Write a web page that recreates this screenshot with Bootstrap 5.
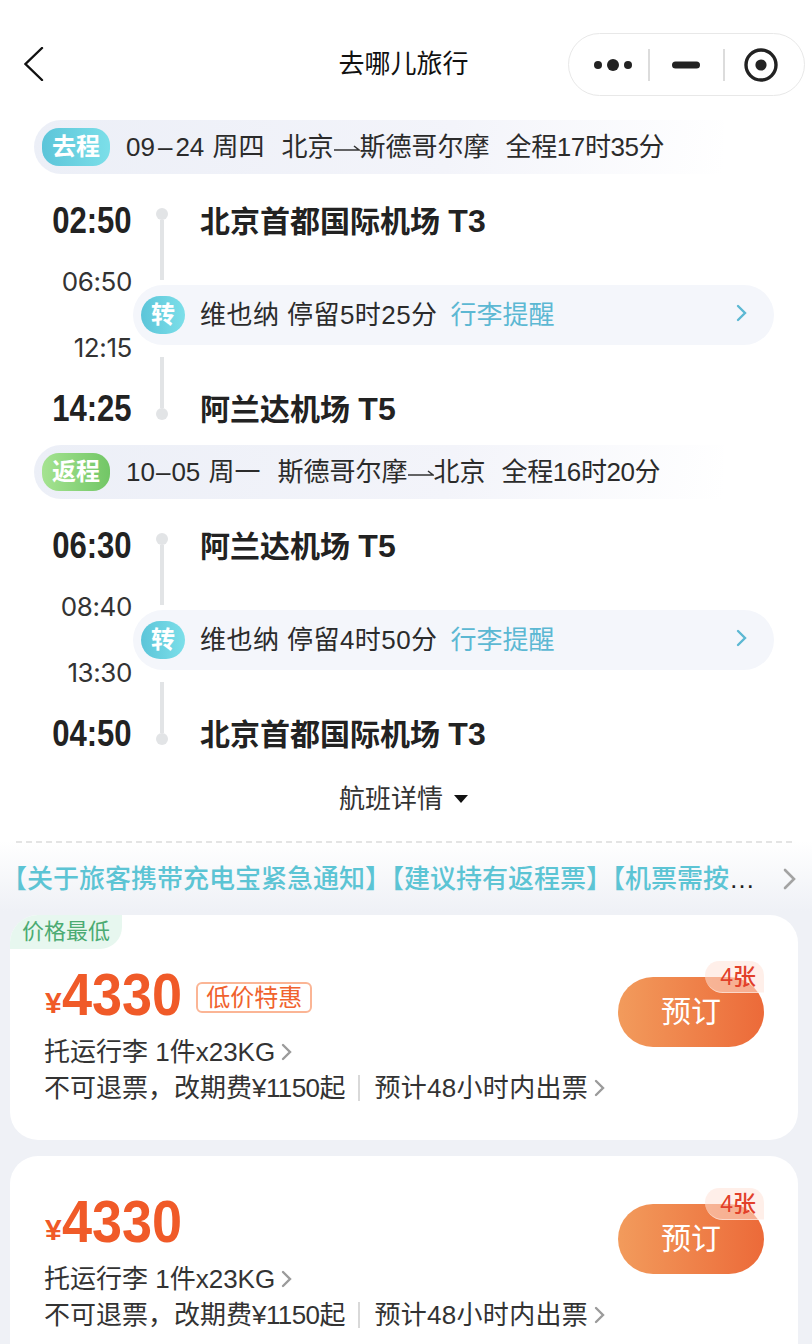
<!DOCTYPE html>
<html lang="zh-CN">
<head>
    <meta charset="UTF-8">
    <meta name="viewport" content="width=device-width, initial-scale=1.0">
    <title>去哪儿旅行</title>
    <link href="https://cdn.jsdelivr.net/npm/bootstrap@5.3.0/dist/css/bootstrap.min.css" rel="stylesheet">
    <style>
        html, body { height: 1344px; overflow: hidden; }
        body { font-family: "Liberation Sans", "Noto Sans CJK SC", sans-serif; color: #2b2b2b; font-size: 26px; line-height: 30px; background: #fff; }

        .top-bar { height: 120px; padding: 33px 7px 0 24px; position: relative; }
        .top-back { margin-top: 14px; }
        .top-title { position: absolute; left: 0; right: 5px; top: 49px; text-align: center; color: #111; font-size: 26px; }
        .capsule { width: 237px; height: 63px; border: 1px solid #e8e8e8; border-radius: 32px; padding-left: 24px; position: relative; }
        .capsule-sep { width: 2px; height: 32px; background: #dcdcdc; }
        .cap-sep1 { margin-left: 15px; }
        .cap-minus { margin-left: 22px; }
        .cap-sep2 { margin-left: 23px; }
        .cap-target { margin-left: 19px; }

        .seg-bar { height: 54px; margin-left: 34px; width: 690px; border-radius: 27px 0 0 27px; padding-left: 8px; background: linear-gradient(100deg, #eceff7 0%, #f3f4fa 60%, #fff 100%); gap: 16px; white-space: nowrap; }
        .seg-tag { width: 68px; height: 38px; border-radius: 17px; color: #fff; font-weight: 700; font-size: 24px; }
        .tag-out { background: linear-gradient(90deg, #5cc5d9, #7cdfe9); }
        .tag-back { background: linear-gradient(90deg, #a5e391, #72c666); }
        .seg-date { word-spacing: 1px; }
        .seg-dash { margin: 0 3px; }
        .seg-dash.tight { margin: 0 1px; }
        .seg-route { margin-left: 1px; }
        .seg-arrow { vertical-align: 2px; }
        .seg-total { letter-spacing: -.4px; }

        .stop-row { height: 48px; }
        .stop-row.first { margin-top: 23px; }
        .stop-row.last { margin-bottom: 12px; }
        .stop-time { width: 132px; text-align: right; font-weight: 700; font-size: 37px; color: #222; }
        .stop-time span { display: inline-block; transform: scaleX(.84); transform-origin: right center; }
        .axis { width: 60px; height: 100%; }
        .axis-dot { width: 12px; height: 12px; border-radius: 50%; background: #e2e4e6; flex: none; }
        .axis-line { width: 4px; background: #e2e4e6; flex: 1; }
        .axis-top { padding-top: 11px; }
        .axis-bottom { padding-bottom: 13px; }
        .stop-name { margin-left: 8px; font-size: 30px; font-weight: 700; color: #222; white-space: nowrap; }
        .term { font-size: 32px; }

        .stay-row { height: 140px; }
        .stay-times { width: 132px; padding-top: 22px; gap: 36px; text-align: right; font-family: Inter, "Liberation Sans", sans-serif; font-size: 26px; letter-spacing: -.4px; color: #333; }
        .stay-line { width: 4px; margin-left: 28px; background: #e2e4e6; }
        .line-upper { height: 35px; }
        .line-lower { height: 28px; }
        .stay-pill { width: 641px; height: 60px; margin: 5px 0 12px 1px; border-radius: 30px; background: #f4f6fb; padding: 0 27px 0 8px; white-space: nowrap; }
        .stay-icon { width: 44px; height: 38px; border-radius: 19px; margin-right: 15px; color: #fff; font-weight: 700; font-size: 24px; background: linear-gradient(90deg, #5cc5d9, #7cdfe9); }
        .stay-text { letter-spacing: .45px; }
        .stay-link { color: #5cb8d3; margin-left: 13px; }
        .stay-chevron { margin-top: -4px; }

        .detail-link { height: 60px; margin-top: 11px; padding-right: 5px; gap: 11px; color: #333; }
        .caret { width: 0; height: 0; border-left: 7px solid transparent; border-right: 7px solid transparent; border-top: 8px solid #111; }

        .lower { margin-top: 12px; background: linear-gradient(#fff 0, #eff1f6 70px); height: 510px; padding: 0 14px 0 10px; }
        .dash-line { border-top: 2px dashed #e4e4e4; margin: 0 6px 0 6px; }
        .notice { height: 72px; }
        .notice-text { color: #5cc4d4; white-space: nowrap; margin-left: -9px; font-weight: 500; }
        .notice-more { color: #222; font-weight: 400; }
        .notice-chevron { margin-right: 2px; }

        .fare { background: #fff; border-radius: 28px; position: relative; margin-bottom: 16px; padding: 40px 34px 0 34px; height: 225px; }
        .fare.fare-tagged { padding-top: 54px; }
        .fare-flag { position: absolute; left: 0; top: 0; width: 112px; height: 34px; background: #e7f7ef; color: #4bab72; font-size: 22px; border-radius: 28px 0 22px 0; text-align: center; line-height: 34px; }
        .price-row { margin: 0 0 13px 1px; }
        .price-mark { color: #f05a28; font-weight: 700; font-size: 30px; line-height: 1; padding-bottom: 3px; }
        .price-num { display: inline-block; color: #f05a28; font-weight: 700; font-size: 60px; line-height: 52px; transform: scaleX(.9); transform-origin: left center; margin-right: -15px; }
        .price-tag { border: 2px solid #fbb595; border-radius: 6px; color: #f0622e; font-size: 24px; line-height: 27px; padding: 0 8px; margin-left: 16px; margin-bottom: 8px; }
        .fare-line { height: 36px; white-space: nowrap; color: #333; }
        .fare-yuan { letter-spacing: -.6px; }
        .fare-tail { letter-spacing: .3px; }
        .fare-sep { width: 2px; height: 26px; background: #d9d9d9; margin: 0 14px 0 13px; }
        .fare-chevron { margin-left: 6px; }
        .book-wrap { position: relative; margin-top: 8px; }
        .book-btn { width: 146px; height: 70px; border: 0; border-radius: 35px; color: #fff; font-size: 30px; line-height: 70px; text-align: center; background: linear-gradient(90deg, #f29b5c, #ec6a39); padding: 0; display: block; }
        .left-stock { position: absolute; right: 0; top: -16px; width: 59px; height: 32px; border-radius: 16px 16px 0 20px; background: rgba(255, 225, 215, .55); border-bottom: 1px solid rgba(255, 255, 255, .5); color: #e2402a; font-size: 23px; font-weight: 500; line-height: 33px; text-align: right; padding-right: 8px; }
    </style>
</head>
<body>
    <div class="top-bar d-flex justify-content-between">
        <svg class="top-back" width="20" height="34" viewBox="0 0 20 34" fill="none" stroke="#111" stroke-width="2.4" stroke-linecap="round"><path d="M18 1 1.5 17 18 33"/></svg>
        <div class="top-title">去哪儿旅行</div>
        <div class="capsule d-flex align-items-center">
            <svg width="40" height="18" viewBox="0 0 40 18" fill="#222"><circle cx="5" cy="9" r="4"/><circle cx="20" cy="9" r="6"/><circle cx="35" cy="9" r="4"/></svg>
            <div class="capsule-sep cap-sep1"></div>
            <svg class="cap-minus" width="28" height="8" viewBox="0 0 28 8" fill="#222"><rect width="28" height="7" y=".5" rx="3.5"/></svg>
            <div class="capsule-sep cap-sep2"></div>
            <svg class="cap-target" width="34" height="34" viewBox="0 0 34 34" fill="none"><circle cx="17" cy="17" r="15" stroke="#222" stroke-width="3.4"/><circle cx="17" cy="17" r="5.6" fill="#222"/></svg>
        </div>
    </div>

    <div class="seg-bar d-flex align-items-center">
        <span class="seg-tag tag-out d-flex align-items-center justify-content-center">去程</span>
        <span class="seg-date">09<span class="seg-dash">–</span>24 周四</span>
        <span class="seg-route">北京<svg class="seg-arrow" width="26" height="10" viewBox="0 0 26 10" fill="none" stroke="#333" stroke-width="1.5"><path d="M0 6h25L20 2"/></svg>斯德哥尔摩</span>
        <span class="seg-total">全程17时35分</span>
    </div>
    <div class="stop-row first d-flex align-items-center">
        <div class="stop-time"><span>02:50</span></div>
        <div class="axis axis-top d-flex flex-column align-items-center"><div class="axis-dot"></div><div class="axis-line"></div></div>
        <div class="stop-name">北京首都国际机场 <span class="term">T3</span></div>
    </div>
    <div class="stay-row d-flex">
        <div class="stay-times d-flex flex-column"><div>06:50</div><div>12:15</div></div>
        <div class="d-flex flex-column">
            <div class="stay-line line-upper"></div>
            <div class="stay-pill d-flex align-items-center">
                <span class="stay-icon d-flex align-items-center justify-content-center">转</span>
                <span class="stay-text">维也纳 停留5时25分</span><span class="stay-link">行李提醒</span>
                <svg class="stay-chevron ms-auto" width="11" height="18" viewBox="0 0 11 18" fill="none" stroke="#5cb8d3" stroke-width="2.4" stroke-linecap="round"><path d="M2 2l7 7-7 7"/></svg>
            </div>
            <div class="stay-line line-lower"></div>
        </div>
    </div>
    <div class="stop-row last d-flex align-items-center">
        <div class="stop-time"><span>14:25</span></div>
        <div class="axis axis-bottom d-flex flex-column align-items-center"><div class="axis-line"></div><div class="axis-dot"></div></div>
        <div class="stop-name">阿兰达机场 <span class="term">T5</span></div>
    </div>

    <div class="seg-bar d-flex align-items-center">
        <span class="seg-tag tag-back d-flex align-items-center justify-content-center">返程</span>
        <span class="seg-date">10<span class="seg-dash tight">–</span>05 周一</span>
        <span class="seg-route">斯德哥尔摩<svg class="seg-arrow" width="26" height="10" viewBox="0 0 26 10" fill="none" stroke="#333" stroke-width="1.5"><path d="M0 6h25L20 2"/></svg>北京</span>
        <span class="seg-total">全程16时20分</span>
    </div>
    <div class="stop-row first d-flex align-items-center">
        <div class="stop-time"><span>06:30</span></div>
        <div class="axis axis-top d-flex flex-column align-items-center"><div class="axis-dot"></div><div class="axis-line"></div></div>
        <div class="stop-name">阿兰达机场 <span class="term">T5</span></div>
    </div>
    <div class="stay-row d-flex">
        <div class="stay-times d-flex flex-column"><div>08:40</div><div>13:30</div></div>
        <div class="d-flex flex-column">
            <div class="stay-line line-upper"></div>
            <div class="stay-pill d-flex align-items-center">
                <span class="stay-icon d-flex align-items-center justify-content-center">转</span>
                <span class="stay-text">维也纳 停留4时50分</span><span class="stay-link">行李提醒</span>
                <svg class="stay-chevron ms-auto" width="11" height="18" viewBox="0 0 11 18" fill="none" stroke="#5cb8d3" stroke-width="2.4" stroke-linecap="round"><path d="M2 2l7 7-7 7"/></svg>
            </div>
            <div class="stay-line line-lower"></div>
        </div>
    </div>
    <div class="stop-row d-flex align-items-center">
        <div class="stop-time"><span>04:50</span></div>
        <div class="axis axis-bottom d-flex flex-column align-items-center"><div class="axis-line"></div><div class="axis-dot"></div></div>
        <div class="stop-name">北京首都国际机场 <span class="term">T3</span></div>
    </div>

    <div class="detail-link d-flex align-items-center justify-content-center">航班详情 <span class="caret"></span></div>

    <div class="lower">
        <div class="dash-line"></div>
        <div class="notice d-flex align-items-center">
            <div class="notice-text">【关于旅客携带充电宝紧急通知】【建议持有返程票】【机票需按<span class="notice-more">…</span></div>
            <svg class="notice-chevron ms-auto" width="13" height="22" viewBox="0 0 13 22" fill="none" stroke="#a3a3a3" stroke-width="2.6" stroke-linecap="round"><path d="M2 2l9 9-9 9"/></svg>
        </div>

        <div class="fare fare-tagged d-flex justify-content-between">
            <div class="fare-flag">价格最低</div>
            <div>
                <div class="price-row d-flex align-items-end">
                    <span class="price-mark">¥</span><span class="price-num">4330</span><span class="price-tag">低价特惠</span>
                </div>
                <div class="fare-line d-flex align-items-center">托运行李 1件x23KG
                    <svg class="fare-chevron" width="11" height="18" viewBox="0 0 11 18" fill="none" stroke="#9b9b9b" stroke-width="2.4" stroke-linecap="round"><path d="M2 2l7 7-7 7"/></svg>
                </div>
                <div class="fare-line d-flex align-items-center"><span>不可退票，改期费<span class="fare-yuan">¥1150</span>起</span><span class="fare-sep"></span><span class="fare-tail">预计48小时内出票</span>
                    <svg class="fare-chevron" width="11" height="18" viewBox="0 0 11 18" fill="none" stroke="#9b9b9b" stroke-width="2.4" stroke-linecap="round"><path d="M2 2l7 7-7 7"/></svg>
                </div>
            </div>
            <div class="book-wrap">
                <button class="book-btn btn" type="button">预订</button>
                <div class="left-stock">4张</div>
            </div>
        </div>

        <div class="fare d-flex justify-content-between">
            <div>
                <div class="price-row d-flex align-items-end">
                    <span class="price-mark">¥</span><span class="price-num">4330</span>
                </div>
                <div class="fare-line d-flex align-items-center">托运行李 1件x23KG
                    <svg class="fare-chevron" width="11" height="18" viewBox="0 0 11 18" fill="none" stroke="#9b9b9b" stroke-width="2.4" stroke-linecap="round"><path d="M2 2l7 7-7 7"/></svg>
                </div>
                <div class="fare-line d-flex align-items-center"><span>不可退票，改期费<span class="fare-yuan">¥1150</span>起</span><span class="fare-sep"></span><span class="fare-tail">预计48小时内出票</span>
                    <svg class="fare-chevron" width="11" height="18" viewBox="0 0 11 18" fill="none" stroke="#9b9b9b" stroke-width="2.4" stroke-linecap="round"><path d="M2 2l7 7-7 7"/></svg>
                </div>
            </div>
            <div class="book-wrap">
                <button class="book-btn btn" type="button">预订</button>
                <div class="left-stock">4张</div>
            </div>
        </div>
    </div>

    <script src="https://cdn.jsdelivr.net/npm/bootstrap@5.3.0/dist/js/bootstrap.bundle.min.js"></script>
</body>
</html>
